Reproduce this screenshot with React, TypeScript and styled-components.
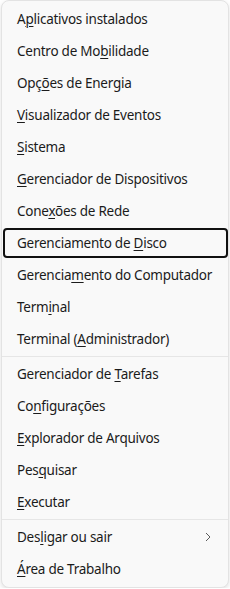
import React from "react";
import styled, { createGlobalStyle } from "styled-components";

const GlobalStyle = createGlobalStyle`
  html, body {
    margin: 0;
    padding: 0;
    background: #ffffff;
  }
  body {
    font-family: "Noto Sans", "Open Sans", sans-serif;
  }
`;

const Menu = styled.div`
  box-sizing: border-box;
  width: 228px;
  margin: 0 0 0 1px;
  padding: 2px 0 2px;
  background: #f9f9f9;
  border: 1px solid #e3e3e3;
  border-radius: 8px;
  box-shadow: 0 2px 5px rgba(0, 0, 0, 0.12);
  display: flex;
  flex-direction: column;
`;

const Item = styled.div<{ focused?: boolean }>`
  position: relative;
  height: 32px;
  display: flex;
  align-items: center;
  justify-content: space-between;
  padding: 0 16px 0 15px;
  font-size: 13.5px;
  letter-spacing: -0.25px;
  color: #1b1b1b;
  white-space: nowrap;
  &::before {
    content: "";
    position: absolute;
    left: 1px;
    right: 0;
    top: 1px;
    bottom: 1px;
    border-radius: 4px;
    border: 2px solid ${({ focused }) => (focused ? "#111111" : "transparent")};
    pointer-events: none;
  }
`;

const Key = styled.span`
  text-decoration: underline;
  text-underline-offset: 2px;
  text-decoration-thickness: 1px;
`;

const Separator = styled.div`
  height: 1px;
  background: #e6e6e6;
  margin: 1px 0 1px;
`;

const Chevron = () => (
  <svg width="8" height="10" viewBox="0 0 8 10" aria-hidden>
    <path d="M2 1 L6 5 L2 9" fill="none" stroke="#5c5c5c" strokeWidth="1" />
  </svg>
);

type Entry = { pre: string; key: string; post: string; focused?: boolean; sub?: boolean };

const groups: Entry[][] = [
  [
    { pre: "A", key: "p", post: "licativos instalados" },
    { pre: "Centro de Mo", key: "b", post: "ilidade" },
    { pre: "Opç", key: "õ", post: "es de Energia" },
    { pre: "", key: "V", post: "isualizador de Eventos" },
    { pre: "", key: "S", post: "istema" },
    { pre: "", key: "G", post: "erenciador de Dispositivos" },
    { pre: "Cone", key: "x", post: "ões de Rede" },
    { pre: "Gerenciamento de ", key: "D", post: "isco", focused: true },
    { pre: "Gerencia", key: "m", post: "ento do Computador" },
    { pre: "Term", key: "i", post: "nal" },
    { pre: "Terminal (", key: "A", post: "dministrador)" },
  ],
  [
    { pre: "Gerenciador de ", key: "T", post: "arefas" },
    { pre: "Co", key: "n", post: "figurações" },
    { pre: "", key: "E", post: "xplorador de Arquivos" },
    { pre: "Pes", key: "q", post: "uisar" },
    { pre: "", key: "E", post: "xecutar" },
  ],
  [
    { pre: "Des", key: "l", post: "igar ou sair", sub: true },
    { pre: "", key: "Á", post: "rea de Trabalho" },
  ],
];

export default function App() {
  return (
    <>
      <GlobalStyle />
      <Menu>
        {groups.map((group, gi) => (
          <React.Fragment key={gi}>
            {gi > 0 && <Separator />}
            {group.map((e, i) => (
              <Item key={i} focused={e.focused}>
                <span>
                  {e.pre}
                  <Key>{e.key}</Key>
                  {e.post}
                </span>
                {e.sub && <Chevron />}
              </Item>
            ))}
          </React.Fragment>
        ))}
      </Menu>
    </>
  );
}
